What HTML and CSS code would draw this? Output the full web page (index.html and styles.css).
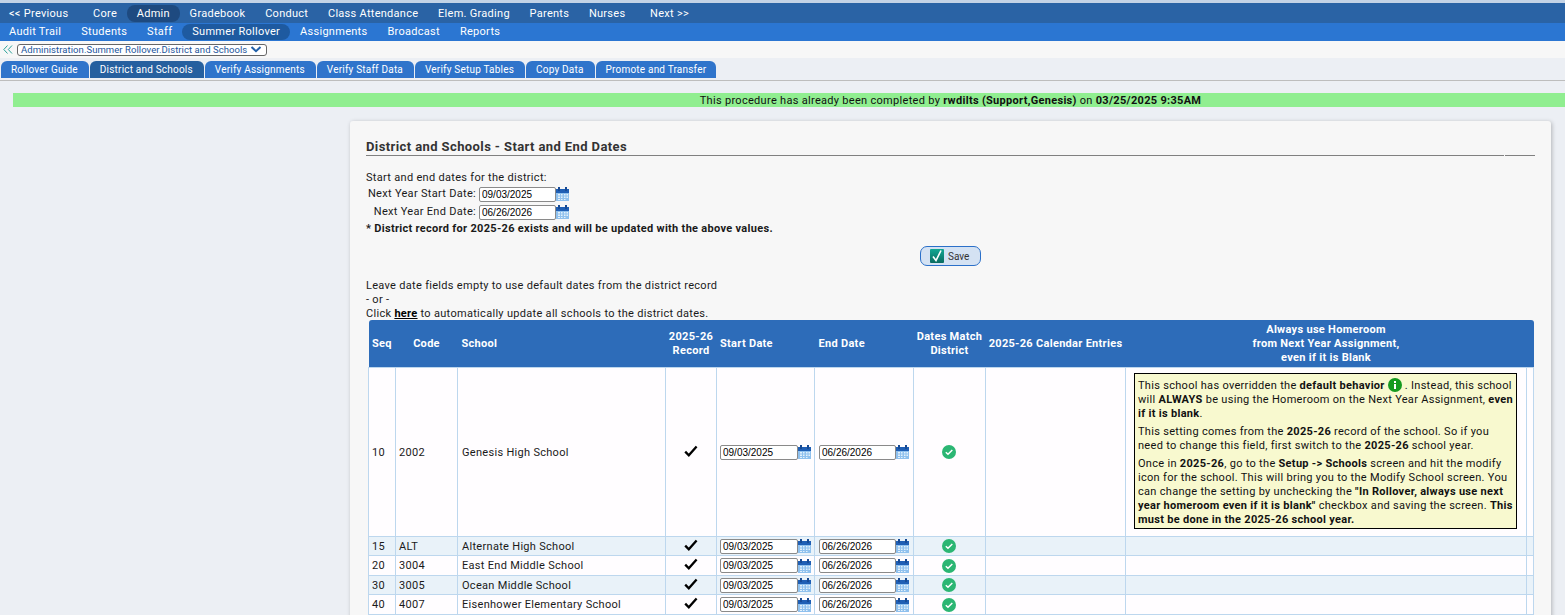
FILE: index.html
```html
<!DOCTYPE html>
<html lang="en">
<head>
<meta charset="utf-8">
<title>District and Schools</title>
<link rel="stylesheet" href="styles.css">
</head>
<body>
<svg class="defs" width="0" height="0" aria-hidden="true">
  <defs>
    <linearGradient id="teal" x1="0" y1="0" x2="0" y2="1">
      <stop offset="0" stop-color="#12a893"/>
      <stop offset="1" stop-color="#0a6b60"/>
    </linearGradient>
  </defs>
  <symbol id="cal" viewBox="0 0 13 14">
    <rect x="0" y="2" width="13" height="12" fill="#8fc1ee"/>
    <rect x="0" y="2" width="13" height="4" fill="#1f5fb5"/>
    <rect x="2" y="0" width="2" height="4" fill="#174a94"/>
    <rect x="9" y="0" width="2" height="4" fill="#174a94"/>
    <path d="M2 7h2v1.500H2zM5 7h1.500v1.500H5zM8 7h1.500v1.500H8zM10.500 7H12v1.500h-1.500zM2 9.500h2V11H2zM5 9.500h1.500V11H5zM8 9.500h1.500V11H8zM10.500 9.500H12V11h-1.500zM2 12h2v1H2zM5 12h1.500v1H5zM8 12h1.500v1H8z" fill="#e4f1fb"/>
  </symbol>
  <symbol id="tick" viewBox="0 0 14 12">
    <path d="M1.200 6.600 4.800 10.300 12.600 1.400" fill="none" stroke="#000" stroke-width="2.300"/>
  </symbol>
  <symbol id="ok" viewBox="0 0 14 14">
    <circle cx="7" cy="7" r="7" fill="#2bb673"/>
    <path d="M3.800 7.200 6 9.300 10.300 5" fill="none" stroke="#fff" stroke-width="1.500"/>
  </symbol>
</svg>

<div class="strip"></div>
<nav class="nav1">
  <a class="n1 wide">&lt;&lt; Previous</a><a class="n1">Core</a><a class="n1 on">Admin</a><a class="n1">Gradebook</a><a class="n1">Conduct</a><a class="n1">Class Attendance</a><a class="n1">Elem. Grading</a><a class="n1">Parents</a><a class="n1 wide">Nurses</a><a class="n1">Next &gt;&gt;</a>
</nav>
<nav class="nav2">
  <a class="n2">Audit Trail</a><a class="n2">Students</a><a class="n2">Staff</a><a class="n2 on">Summer Rollover</a><a class="n2">Assignments</a><a class="n2">Broadcast</a><a class="n2">Reports</a>
</nav>
<div class="crumbs">
  <svg class="back" width="10" height="9" viewBox="0 0 10 9"><path d="M4.500.5.800 4.500l3.700 4M9 .5 5.300 4.500 9 8.500" fill="none" stroke="#2aa198" stroke-width="1"/></svg>
  <span class="crumb">Administration.Summer Rollover.District and Schools
    <svg width="12" height="7" viewBox="0 0 12 7"><path d="M1.500 1 6 5.200 10.500 1" fill="none" stroke="#1f5fa8" stroke-width="2"/></svg>
  </span>
</div>
<div class="tabs">
  <a class="tab">Rollover Guide</a><a class="tab on">District and Schools</a><a class="tab">Verify Assignments</a><a class="tab">Verify Staff Data</a><a class="tab">Verify Setup Tables</a><a class="tab">Copy Data</a><a class="tab">Promote and Transfer</a>
</div>
<div class="notice">This procedure has already been completed by <b>rwdilts (Support,Genesis)</b> on <b>03/25/2025 9:35AM</b></div>

<main class="panel">
  <div class="title-row"><h1 class="title">District and Schools - Start and End Dates</h1><span class="title-tail"></span></div>
  <p class="line">Start and end dates for the district:</p>
  <div class="date-row"><label class="date-label">Next Year Start Date:</label><input class="date" value="09/03/2025"><svg class="cal"><use href="#cal"/></svg></div>
  <div class="date-row"><label class="date-label">Next Year End Date:</label><input class="date" value="06/26/2026"><svg class="cal"><use href="#cal"/></svg></div>
  <p class="line after-dates"><b>* District record for 2025-26 exists and will be updated with the above values.</b></p>
  <div class="save-row">
    <button class="save"><svg width="14" height="14" viewBox="0 0 14 14"><rect width="14" height="14" rx="1" fill="url(#teal)"/><path d="M3 7.500 6 11.500 11 1.500" fill="none" stroke="#fff" stroke-width="1.600"/></svg>Save</button>
  </div>
  <p class="line">Leave date fields empty to use default dates from the district record</p>
  <p class="line">- or -</p>
  <p class="line">Click <a class="here">here</a> to automatically update all schools to the district dates.</p>

  <table class="grid">
    <colgroup>
      <col class="c1"><col class="c2"><col class="c3"><col class="c4"><col class="c5"><col class="c6"><col class="c7"><col class="c8"><col class="c9"><col class="c10">
    </colgroup>
    <thead>
      <tr>
        <th class="l">Seq</th><th>Code</th><th class="l">School</th><th>2025-26<br>Record</th><th class="l">Start Date</th><th class="l">End Date</th><th>Dates Match<br>District</th><th>2025-26 Calendar Entries</th><th>Always use Homeroom<br>from Next Year Assignment,<br>even if it is Blank</th><th></th>
      </tr>
    </thead>
    <tbody>
      <tr class="tall">
        <td>10</td><td>2002</td><td>Genesis High School</td>
        <td class="m"><svg class="tick"><use href="#tick"/></svg></td>
        <td><div class="cell-date"><input class="date" value="09/03/2025"><svg class="cal"><use href="#cal"/></svg></div></td>
        <td><div class="cell-date"><input class="date" value="06/26/2026"><svg class="cal"><use href="#cal"/></svg></div></td>
        <td class="m"><svg class="ok"><use href="#ok"/></svg></td>
        <td></td>
        <td class="notecell">
          <div class="note">
            <p>This school has overridden the <b>default behavior</b> <svg class="info" width="14" height="14" viewBox="0 0 14 14"><circle cx="7" cy="7" r="7" fill="#159a1f"/><rect x="6" y="6" width="2" height="5" fill="#fff"/><rect x="6" y="3" width="2" height="2" fill="#fff"/></svg> . Instead, this school will <b>ALWAYS</b> be using the Homeroom on the Next Year Assignment, <b>even if it is blank</b>.</p>
            <p>This setting comes from the <b>2025-26</b> record of the school. So if you need to change this field, first switch to the <b>2025-26</b> school year.</p>
            <p>Once in <b>2025-26</b>, go to the <b>Setup -&gt; Schools</b> screen and hit the modify icon for the school. This will bring you to the Modify School screen. You can change the setting by unchecking the <b>"In Rollover, always use next year homeroom even if it is blank"</b> checkbox and saving the screen. <b>This must be done in the 2025-26 school year.</b></p>
          </div>
        </td>
        <td></td>
      </tr>
      <tr class="alt">
        <td>15</td><td>ALT</td><td>Alternate High School</td>
        <td class="m"><svg class="tick"><use href="#tick"/></svg></td>
        <td><div class="cell-date"><input class="date" value="09/03/2025"><svg class="cal"><use href="#cal"/></svg></div></td>
        <td><div class="cell-date"><input class="date" value="06/26/2026"><svg class="cal"><use href="#cal"/></svg></div></td>
        <td class="m"><svg class="ok"><use href="#ok"/></svg></td><td></td><td></td><td></td>
      </tr>
      <tr>
        <td>20</td><td>3004</td><td>East End Middle School</td>
        <td class="m"><svg class="tick"><use href="#tick"/></svg></td>
        <td><div class="cell-date"><input class="date" value="09/03/2025"><svg class="cal"><use href="#cal"/></svg></div></td>
        <td><div class="cell-date"><input class="date" value="06/26/2026"><svg class="cal"><use href="#cal"/></svg></div></td>
        <td class="m"><svg class="ok"><use href="#ok"/></svg></td><td></td><td></td><td></td>
      </tr>
      <tr class="alt">
        <td>30</td><td>3005</td><td>Ocean Middle School</td>
        <td class="m"><svg class="tick"><use href="#tick"/></svg></td>
        <td><div class="cell-date"><input class="date" value="09/03/2025"><svg class="cal"><use href="#cal"/></svg></div></td>
        <td><div class="cell-date"><input class="date" value="06/26/2026"><svg class="cal"><use href="#cal"/></svg></div></td>
        <td class="m"><svg class="ok"><use href="#ok"/></svg></td><td></td><td></td><td></td>
      </tr>
      <tr>
        <td>40</td><td>4007</td><td>Eisenhower Elementary School</td>
        <td class="m"><svg class="tick"><use href="#tick"/></svg></td>
        <td><div class="cell-date"><input class="date" value="09/03/2025"><svg class="cal"><use href="#cal"/></svg></div></td>
        <td><div class="cell-date"><input class="date" value="06/26/2026"><svg class="cal"><use href="#cal"/></svg></div></td>
        <td class="m"><svg class="ok"><use href="#ok"/></svg></td><td></td><td></td><td></td>
      </tr>
    </tbody>
  </table>
</main>
</body>
</html>
```

FILE: styles.css
```css
* { box-sizing: border-box; }
html, body { height: 615px; overflow: hidden; }
body {
  margin: 0;
  background: #eceff4;
  color: #1a1a1a;
  font: 11px/14px Roboto, "Liberation Sans", sans-serif;
  letter-spacing: .3px;
}
.defs { position: absolute; }
p { margin: 0; }

.strip { height: 3px; background: #c3d3e6; }
.nav1, .nav2 { display: flex; align-items: center; color: #fff; padding-left: 0; }
.nav1 { height: 20px; background: #2a63a5; }
.nav2 { height: 18px; background: #2b76d2; padding-bottom: 1px; }
.n1, .n2 { display: block; white-space: nowrap; border-radius: 8px; font-size: 11px; letter-spacing: .28px; }
.n1 { padding: 0 9.850px; line-height: 17px; }
.n1:first-child { margin-left: -.850px; }
.n2:first-child { margin-left: -1px; }
.n1.wide { margin-right: 5px; }
.n1.on { background: #1e4a80; }
.n2 { padding: 0 10px; line-height: 16px; }
.n2.on { background: #1e5aa0; }

.crumbs { height: 17px; background: #f7f7f7; display: flex; align-items: center; padding-left: 3px; gap: 4px; }
.crumb {
  display: flex; align-items: center; gap: 3px;
  height: 12px; padding: 0 4px 0 3px;
  border: 1px solid #666; border-radius: 3px; background: #fff;
  color: #23559c; font-size: 9.500px; line-height: 10px; letter-spacing: .06px;
}

.tabs { height: 23px; padding: 3px 0 0 1px; display: flex; border-bottom: 1px solid #bdbdbd; }
.tab {
  height: 17px; line-height: 17px; padding: 0 11px 0 10px; margin-right: 1px;
  background: #2f74cb; color: #fff; font-size: 10px; border-radius: 6px 6px 0 0; white-space: nowrap; letter-spacing: .2px;
}
.tab:last-child { padding-right: 10px; }
.tab.on { background: #26609f; }

.notice {
  margin: 12px 0 14px 13px; height: 14px; background: #90ee90;
  text-align: center; color: #111; padding-left: 323px; line-height: 15px;
}

.panel {
  margin-left: 350px; width: 1201px; height: 520px;
  background: #f7f7f7; border-radius: 3px;
  box-shadow: 1px 1px 4px rgba(0,0,0,.25);
  padding: 17px 16px 0 16px;
}
.title-row { display: flex; gap: 1px; align-items: flex-end; height: 18px; margin-bottom: 15px; }
.title { margin: 0; flex: 1; font-size: 13px; line-height: 17px; font-weight: 700; color: #333; border-bottom: 1px solid #808080; height: 18px; letter-spacing: .4px; }
.title-tail { width: 30px; border-bottom: 1px solid #808080; }
.line { height: 14px; line-height: 14px; }
.after-dates { margin-top: 1px; }
.date-row { display: flex; align-items: center; height: 18px; justify-content: flex-start; }
.date-row .date { width: 77px; }
.date-label { width: 113px; text-align: right; padding-right: 3px; white-space: nowrap; }
.date {
  width: 78px; height: 15px; padding: 0 2px; margin: 0;
  border: 1px solid #8a8a8a; border-radius: 2px; background: #fff; color: #000;
  font: 10px/13px "Liberation Sans", Arial, sans-serif; letter-spacing: 0; outline: 0;
}
.cal { width: 13px; height: 14px; margin-left: 0; flex: none; }
.save-row { height: 43px; display: flex; justify-content: center; align-items: flex-start; padding: 10px 0 0 0; }
.save {
  display: flex; align-items: center; gap: 4px; width: 61px; height: 20px; padding: 0 0 0 9px;
  border: 1px solid #2b70c9; border-radius: 7px; background: #d4e2f3; color: #333;
  font: 10px Roboto, sans-serif;
}
.here { color: #000; font-weight: 700; text-decoration: underline; }

.grid {
  width: 1165px; margin: -1px 0 0 2px; table-layout: fixed; border-collapse: collapse;
}
.c1 { width: 27px; } .c2 { width: 62px; } .c3 { width: 208px; } .c4 { width: 51px; }
.c5 { width: 98px; } .c6 { width: 99px; } .c7 { width: 72px; } .c8 { width: 140px; }
.c9 { width: 401px; } .c10 { width: 7px; }
.grid th {
  height: 47px; padding: 2px 2px 0; background: #2d6cb9; color: #fff; font-weight: 700; text-align: center; line-height: 14px;
  white-space: nowrap;
}
.grid th:first-child { border-radius: 3px 0 0 0; }
.grid th:last-child { border-radius: 0 3px 0 0; }
.grid th.l { text-align: left; padding-left: 4px; }
.grid th.l:first-child, .grid th.l:nth-child(5) { padding-left: 3.500px; }
.grid td {
  height: 19.500px; padding: 1px 3px 0; border: 1px solid #bdd7ee; background: #fffdff; white-space: nowrap; vertical-align: middle;
}
.grid td:nth-child(-n+3) { padding-top: 2px; }
.grid td:nth-child(3), .grid td:nth-child(6) { padding-left: 4px; }
.grid td:nth-child(6) .date { width: 77px; }
.grid tr.alt td { background: #e9f2f9; }
.grid tr.tall td { height: 169px; }
.grid td.m { text-align: center; }
.grid td.m:nth-child(7) { padding-right: 4px; }
.cell-date { display: flex; align-items: center; }
.tick { width: 14px; height: 12px; display: block; margin: -3px auto 0; }
.ok { width: 14px; height: 14px; display: block; margin: 0 auto; }
.grid td.notecell { padding: 4px 8px 6px 8px; white-space: normal; }
.note {
  border: 1px solid #000; background: #f8f9cf; padding: 4px 3px 1px 3px; color: #111; width: 383px;
}
.note p { margin-bottom: 4px; }
.note p:last-child { margin-bottom: 0; }
.info { vertical-align: -3px; }
```
